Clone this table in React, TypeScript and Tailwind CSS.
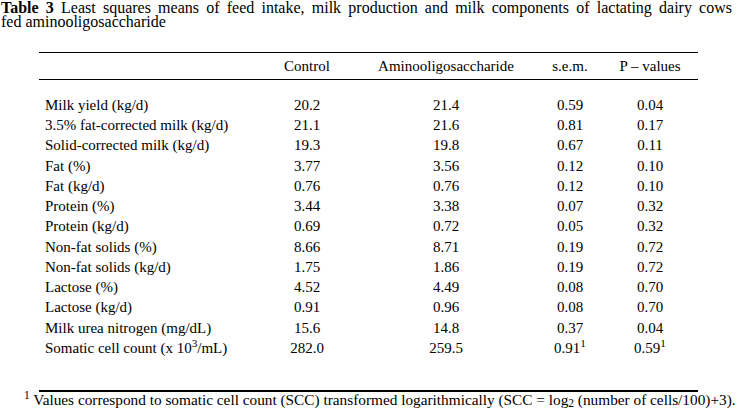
import React from "react";

type Row = {
  label: React.ReactNode;
  control: React.ReactNode;
  amino: React.ReactNode;
  sem: React.ReactNode;
  p: React.ReactNode;
};

const rows: Row[] = [
  { label: "Milk yield (kg/d)", control: "20.2", amino: "21.4", sem: "0.59", p: "0.04" },
  { label: "3.5% fat-corrected milk (kg/d)", control: "21.1", amino: "21.6", sem: "0.81", p: "0.17" },
  { label: "Solid-corrected milk (kg/d)", control: "19.3", amino: "19.8", sem: "0.67", p: "0.11" },
  { label: "Fat (%)", control: "3.77", amino: "3.56", sem: "0.12", p: "0.10" },
  { label: "Fat (kg/d)", control: "0.76", amino: "0.76", sem: "0.12", p: "0.10" },
  { label: "Protein (%)", control: "3.44", amino: "3.38", sem: "0.07", p: "0.32" },
  { label: "Protein (kg/d)", control: "0.69", amino: "0.72", sem: "0.05", p: "0.32" },
  { label: "Non-fat solids (%)", control: "8.66", amino: "8.71", sem: "0.19", p: "0.72" },
  { label: "Non-fat solids (kg/d)", control: "1.75", amino: "1.86", sem: "0.19", p: "0.72" },
  { label: "Lactose (%)", control: "4.52", amino: "4.49", sem: "0.08", p: "0.70" },
  { label: "Lactose (kg/d)", control: "0.91", amino: "0.96", sem: "0.08", p: "0.70" },
  { label: "Milk urea nitrogen (mg/dL)", control: "15.6", amino: "14.8", sem: "0.37", p: "0.04" },
  {
    label: (
      <>
        Somatic cell count (x 10<sup>3</sup>/mL)
      </>
    ),
    control: "282.0",
    amino: "259.5",
    sem: (
      <>
        0.91<sup>1</sup>
      </>
    ),
    p: (
      <>
        0.59<sup>1</sup>
      </>
    ),
  },
];

const cols = "grid grid-cols-[211px_114px_164px_84px_76px_10px]";

export default function App() {
  return (
    <div className="relative h-[412px] w-[738px] overflow-hidden bg-white [font-family:Liberation_Serif,serif] text-[15px] text-black">
      {/* Caption: first line justified to full width, "fed" on second line */}
      <div className="w-[732px] pl-[1px] pt-[1px] text-[16px] leading-[14px]">
        <span className="block whitespace-nowrap text-justify [text-align-last:justify]">
          <b>Table 3</b> Least squares means of feed intake, milk production and milk components of lactating dairy
          cows
        </span>
        <span className="block">fed aminooligosaccharide</span>
      </div>

      {/* Table */}
      <div className="ml-[39px] mt-[23px] w-[659px]">
        <div className={`${cols} h-[27.5px] border-y-[1.5px] border-black pt-[2.5px] leading-[20px]`}>
          <span />
          <span className="text-center">Control</span>
          <span className="text-center">Aminooligosaccharide</span>
          <span className="text-center">s.e.m.</span>
          <span className="text-center">P – values</span>
          <span />
        </div>

        <div className="pt-[15.3px] pb-[32px] leading-[20.25px]">
          {rows.map((r, i) => (
            <div key={i} className={cols}>
              <span className="whitespace-nowrap pl-[6px]">{r.label}</span>
              <span className="text-center">{r.control}</span>
              <span className="text-center">{r.amino}</span>
              <span className="text-center">{r.sem}</span>
              <span className="text-center">{r.p}</span>
              <span />
            </div>
          ))}
        </div>

        <div className="h-[1.5px] bg-black" />
      </div>

      {/* Footnote */}
      <p className="ml-[24px] whitespace-nowrap text-[15.3px] leading-[15px]">
        <sup>1</sup> Values correspond to somatic cell count (SCC) transformed logarithmically (SCC = log<sub>2</sub>{" "}
        (number of cells/100)+3).
      </p>
    </div>
  );
}
